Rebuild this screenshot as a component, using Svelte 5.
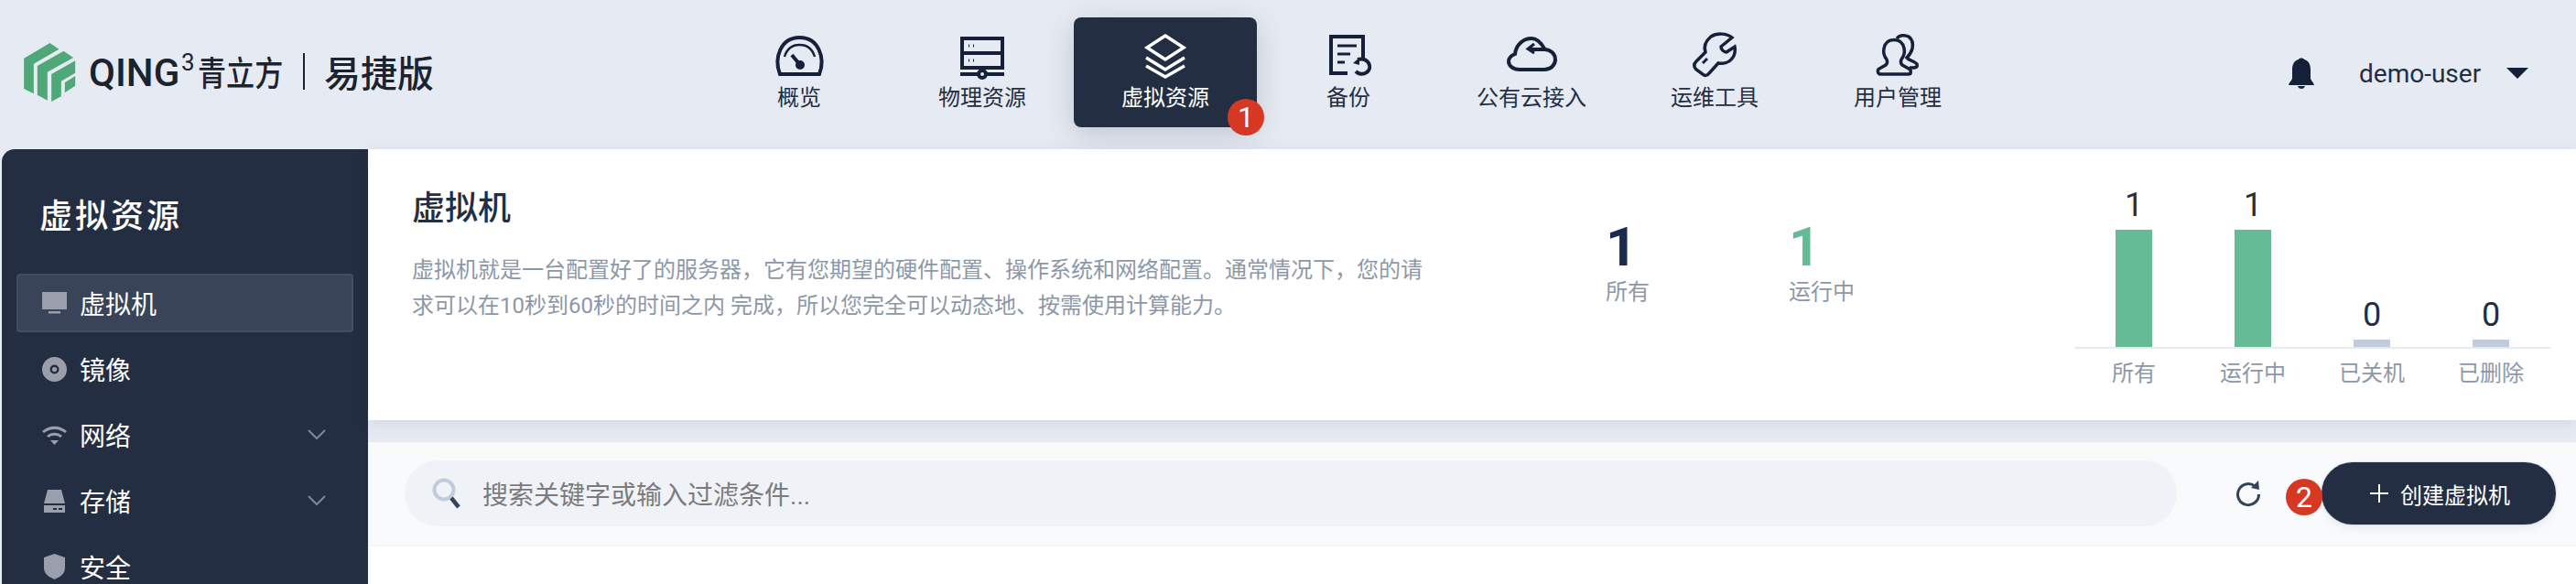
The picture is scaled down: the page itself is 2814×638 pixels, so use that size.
<script>
	const navItems = [
		{ label: '概览', icon: 'gauge' },
		{ label: '物理资源', icon: 'server' },
		{ label: '虚拟资源', icon: 'layers', active: true },
		{ label: '备份', icon: 'backup' },
		{ label: '公有云接入', icon: 'cloud' },
		{ label: '运维工具', icon: 'wrench' },
		{ label: '用户管理', icon: 'user' }
	];

	const sideItems = [
		{ label: '虚拟机', icon: 'monitor', active: true },
		{ label: '镜像', icon: 'disc' },
		{ label: '网络', icon: 'wifi', more: true },
		{ label: '存储', icon: 'drive', more: true },
		{ label: '安全', icon: 'shield' }
	];

	const bars = [
		{ label: '所有', value: 1, height: 128 },
		{ label: '运行中', value: 1, height: 128 },
		{ label: '已关机', value: 0, height: 8 },
		{ label: '已删除', value: 0, height: 8 }
	];
</script>

<div class="page">
	<header class="topbar">
		<div class="logo">
			<svg class="logo-mark" viewBox="18 20 170 195" width="57" height="65" fill="#4fa878">
				<path d="M18 70 L103 20 L133 40 L50 88 V186 L18 170 Z" />
				<path d="M62 95 L148 46 L180 68 L95 115 V208 L62 190 Z" />
				<path d="M108 122 L186 78 V118 L140 145 V195 L108 212 Z" />
				<path d="M152 150 L186 128 V160 L152 183 Z" />
			</svg>
			<span class="logo-en">QING</span><sup class="logo-sup">3</sup>
			<span class="logo-cn">青立方</span>
			<i class="logo-sep"></i>
			<span class="logo-ed">易捷版</span>
		</div>

		<nav class="nav">
			{#each navItems as item}
				<div class="nav-item" class:active={item.active}>
					<svg viewBox="0 0 56 48" width="56" height="48" fill="none" stroke="currentColor" stroke-width="4">
						{#if item.icon === 'gauge'}
							<path d="M7 44 C0 26 8 4 28.500 4 C49 4 57 26 50 44 Z" />
							<path d="M12 25 C15 15 21 12 28.500 12 C36 12 42 15 45 25" stroke-width="2.500" />
							<path d="M20 23 L29 34" stroke-width="4" />
							<circle cx="29" cy="34" r="5" fill="currentColor" stroke="none" />
						{:else if item.icon === 'server'}
							<rect x="6" y="5" width="44" height="16" />
							<rect x="6" y="21" width="44" height="16" />
							<path d="M28 37 V40 M4 44 H52" />
							<circle cx="28" cy="44" r="4" fill="#e6ebf3" />
							<path d="M13 13 H14 M18 13 H19 M13 29 H14 M18 29 H19" stroke-width="3" />
						{:else if item.icon === 'layers'}
							<path d="M28 2 L48 15 L28 28 L8 15 Z" stroke-width="3.500" />
							<path d="M7 26 L28 39 L49 26" stroke-width="3.500" />
							<path d="M7 35 L28 47 L49 35" stroke-width="3.500" />
						{:else if item.icon === 'backup'}
							<path d="M44 26 V3 H9 V43 H27" />
							<path d="M16 13 H37 M16 22 H30 M16 31 H24" stroke-width="3" />
							<path d="M38 28 C50 25 55 37 48 42 C44 45 39 44 36 41" />
							<path d="M33 32 L40 26 L40 34 Z" fill="currentColor" stroke="none" />
						{:else if item.icon === 'cloud'}
							<path d="M42 16 C38 9 34 5 28 5 C19 5 11 12 10 22 C5 24 3 27 3 30 C3 35 8 39 15 39 H42 C49 39 54 34 54 28 C54 22 49 17 42 17 H26" />
							<path d="M31 11 L24 16.500 L31 21" stroke-width="3" />
						{:else if item.icon === 'wrench'}
							<path d="M47 4 C41 -1 30 -1 24 3 C18 8 16 14 18 20 L8 30 C5 33 5 36 8 39 L15 44 C17 46 20 46 22 43 L32 32 C38 33 44 31 47 27 C50 24 51 18 50 14 L41 20 C38 20 35 17 35 14 Z" stroke-width="3.500" />
							<path d="M15 32 L20 27" stroke-width="3" />
						{:else if item.icon === 'user'}
							<path d="M9 44 H40 C43 44 43 39 40 38 L33 34 C31 32 31 30 32 28 C35 24 36 20 35 16 C34 10 30 6.500 24 6.500 C18 6.500 14 10 13 16 C12 20 13 24 16 28 C17 30 17 32 15 34 L8 38 C5.500 39 6 44 9 44 Z" stroke-width="3.500" />
							<path d="M27 5 C30 1 36 1 40 3 C44 6 45 11 44 16 C43 20 41 23 38 26 C40 29 47 30 49 33 C50 36 48 37 45 37 H41" stroke-width="3.500" />
						{/if}
					</svg>
					<span>{item.label}</span>
					{#if item.active}<b class="badge badge-nav">1</b>{/if}
				</div>
			{/each}
		</nav>

		<div class="account">
			<svg viewBox="0 0 28 34" width="28" height="34" fill="#141f38">
				<path d="M11 2 C11 0 17 0 17 2 C22 3 24 8 24 13 V22 C24 25 27 26 28 30 H0 C1 26 4 25 4 22 V13 C4 8 6 3 11 2 Z" />
				<path d="M10 31 H18 C17 35 11 35 10 31 Z" />
			</svg>
			<span class="user-name">demo-user</span>
			<i class="caret"></i>
		</div>
	</header>

	<div class="body">
		<aside class="sidebar">
			<h2>虚拟资源</h2>
			<ul>
				{#each sideItems as item}
					<li class:active={item.active}>
						<svg viewBox="0 0 28 28" width="28" height="28" fill="#9a9fab">
							{#if item.icon === 'monitor'}
								<rect x="0" y="2" width="27" height="19" />
								<rect x="7" y="23" width="13" height="2.500" />
							{:else if item.icon === 'disc'}
								<path fill-rule="evenodd" d="M13.500 1 A13.500 13.500 0 1 1 13.500 28 A13.500 13.500 0 1 1 13.500 1 Z M13.500 9.500 A5 5 0 1 0 13.500 19.500 A5 5 0 1 0 13.500 9.500 Z" />
								<circle cx="13.500" cy="14.500" r="2.600" />
							{:else if item.icon === 'wifi'}
								<path d="M0 10 C8 3 19 3 27 10 L25 12 C18 6.500 9 6.500 2 12 Z" />
								<path d="M5 15 C10 10.500 17 10.500 22 15 L20 17 C16 14 11 14 7 17 Z" />
								<path d="M9 20 H18 L13.500 25 Z" />
							{:else if item.icon === 'drive'}
								<path d="M6 2 H21 L25 17 H2 Z" />
								<path fill-rule="evenodd" d="M2 19 H25 V27 H2 Z M12 22 V24 H16 V22 Z M18 22 V24 H22 V22 Z" />
							{:else if item.icon === 'shield'}
								<path d="M13.500 0 L25 4 V15 C25 22 20 25 13.500 28 C7 25 2 22 2 15 V4 Z" />
							{/if}
						</svg>
						<span>{item.label}</span>
						{#if item.more}
							<svg class="chevron" viewBox="0 0 20 12" width="20" height="12" fill="none" stroke="#7d8494" stroke-width="2.200">
								<path d="M1 1 L10 10 L19 1" />
							</svg>
						{/if}
					</li>
				{/each}
			</ul>
		</aside>

		<main class="main">
			<section class="summary">
				<div class="intro">
					<h1>虚拟机</h1>
					<p>虚拟机就是一台配置好了的服务器，它有您期望的硬件配置、操作系统和网络配置。通常情况下，您的请求可以在10秒到60秒的时间之内 完成，所以您完全可以动态地、按需使用计算能力。</p>
				</div>
				<div class="totals">
					<div class="total">
						<strong>1</strong>
						<span>所有</span>
					</div>
					<div class="total running">
						<strong>1</strong>
						<span>运行中</span>
					</div>
				</div>
				<div class="chart">
					{#each bars as bar}
						<div class="col">
							<div class="plot">
								<span class="value">{bar.value}</span>
								<i class="bar" class:empty={bar.value === 0} style="height: {bar.height}px"></i>
							</div>
							<span class="col-label">{bar.label}</span>
						</div>
					{/each}
				</div>
			</section>

			<section class="toolbar">
				<div class="search">
					<svg viewBox="0 0 32 34" width="32" height="34" fill="none">
						<circle cx="13" cy="13" r="10.500" stroke="#c0ccdb" stroke-width="4" />
						<path d="M21 22 L29 32" stroke="#324558" stroke-width="4.500" />
					</svg>
					<span>搜索关键字或输入过滤条件...</span>
				</div>
				<svg class="refresh" viewBox="0 0 28 30" width="28" height="30" fill="none">
					<path d="M21 7 A11.500 11.500 0 1 0 25.500 16" stroke="#324558" stroke-width="3" />
					<path d="M17 9 L25 1 L26 11 Z" fill="#324558" />
				</svg>
				<button>
					<b class="badge badge-btn">2</b>
					<svg viewBox="0 0 20 20" width="20" height="20" stroke="#fff" stroke-width="2">
						<path d="M10 0 V20 M0 10 H20" />
					</svg>
					创建虚拟机
				</button>
			</section>
		</main>
	</div>
</div>

<style>
	:global(body) {
		margin: 0;
		background: #e6ebf3;
	}

	.page {
		height: 638px;
		overflow: hidden;
		font-family: Roboto, 'Noto Sans CJK SC', sans-serif;
		color: #242e42;
	}

	.topbar {
		height: 163px;
		display: flex;
		position: relative;
	}

	.logo {
		width: 773px;
		box-sizing: border-box;
		padding: 47px 0 0 26px;
		display: flex;
		align-items: flex-start;
		color: #1b232e;
	}

	.logo-mark {
		margin-right: 14px;
	}

	.logo-en {
		font-size: 42px;
		font-weight: 500;
		line-height: 50px;
		margin-top: 8px;
		width: 101px;
	}

	.logo-sup {
		font-size: 26px;
		line-height: 24px;
		margin-top: 9px;
		width: 18px;
	}

	.logo-cn {
		font-size: 37px;
		line-height: 50px;
		margin-top: 10px;
		width: 115px;
		font-weight: 500;
		transform: scaleX(0.84);
		transform-origin: left;
	}

	.logo-sep {
		width: 2px;
		height: 40px;
		margin-top: 11px;
		background: #1b232e;
		margin-right: 21px;
	}

	.logo-ed {
		font-size: 40px;
		line-height: 50px;
		margin-top: 10px;
		font-weight: 500;
	}

	.nav {
		display: flex;
		width: 1400px;
		padding-top: 19px;
		height: 120px;
	}

	.nav-item {
		width: 200px;
		height: 120px;
		display: flex;
		flex-direction: column;
		align-items: center;
		padding-top: 18px;
		box-sizing: border-box;
		position: relative;
		border-radius: 8px;
		color: #162038;
		font-size: 24px;
	}

	.nav-item svg {
		overflow: visible;
	}

	.nav-item span {
		line-height: 34px;
		margin-top: 5px;
		color: #242e42;
	}

	.nav-item.active {
		background: #242e42;
		color: #fff;
		box-shadow: 0 8px 32px rgba(36, 46, 66, 0.2);
	}

	.nav-item.active span {
		color: #fff;
	}

	.badge {
		position: absolute;
		width: 40px;
		height: 40px;
		border-radius: 50%;
		background: #d63823;
		color: #fff;
		font-size: 32px;
		font-weight: 400;
		line-height: 40px;
		text-align: center;
	}

	.badge-nav {
		right: -8px;
		bottom: -9px;
	}

	.badge-btn {
		left: -39px;
		top: 18px;
	}

	.account {
		flex: 1;
		display: flex;
		align-items: center;
		padding: 0 0 3px 327px;
		font-size: 28px;
	}

	.user-name {
		margin-left: 49px;
	}

	.caret {
		margin-left: 28px;
		border-top: 12px solid #141f38;
		border-left: 12px solid transparent;
		border-right: 12px solid transparent;
	}

	.body {
		display: flex;
		padding-left: 2px;
		height: 475px;
	}

	.sidebar {
		width: 400px;
		flex: none;
		background: #242e42;
		border-radius: 14px 0 0 0;
		padding: 0 16px;
		box-sizing: border-box;
		color: #fff;
	}

	.sidebar h2 {
		margin: 53px 0 0 25px;
		font-size: 36px;
		line-height: 42px;
		font-weight: 500;
		letter-spacing: 3px;
	}

	.sidebar ul {
		list-style: none;
		margin: 41px 0 0;
		padding: 0;
		display: flex;
		flex-direction: column;
		gap: 8px;
	}

	.sidebar li {
		height: 64px;
		box-sizing: border-box;
		display: flex;
		align-items: center;
		gap: 13px;
		padding: 0 28px 0 26px;
		font-size: 28px;
		border: 2px solid transparent;
		border-radius: 4px;
	}

	.sidebar li.active {
		background: #3a4459;
		border-color: #434e66;
	}

	.chevron {
		margin-left: auto;
	}

	.main {
		flex: 1;
		min-width: 0;
		display: flex;
		flex-direction: column;
	}

	.main::after {
		content: '';
		flex: 1;
		background: #fff;
	}

	.summary {
		height: 296px;
		flex: none;
		background: #fff;
		display: flex;
		position: relative;
		box-shadow: 0 4px 16px rgba(36, 46, 66, 0.1);
	}

	.intro {
		width: 1304px;
		flex: none;
		box-sizing: border-box;
		padding: 41px 0 0 48px;
	}

	.intro h1 {
		margin: 0;
		font-size: 36px;
		line-height: 48px;
		font-weight: 500;
	}

	.intro p {
		margin: 24px 0 0;
		width: 1110px;
		font-size: 24px;
		line-height: 39px;
		color: #8c98a8;
	}

	.totals {
		display: flex;
		padding-top: 77px;
		box-sizing: border-box;
		flex: none;
		margin-left: 48px;
	}

	.total {
		width: 200px;
		display: flex;
		flex-direction: column;
	}

	.total strong {
		font-size: 60px;
		line-height: 60px;
		font-weight: 700;
		color: #1b2b4f;
	}

	.total span {
		margin-top: 1px;
		font-size: 24px;
		line-height: 36px;
		color: #8c98a8;
	}

	.total.running strong {
		color: #65bb96;
	}

	.chart {
		position: absolute;
		left: 1864px;
		top: 0;
		width: 520px;
		display: flex;
	}

	.col {
		width: 130px;
		display: flex;
		flex-direction: column;
		align-items: center;
	}

	.plot {
		width: 100%;
		height: 216px;
		box-sizing: content-box;
		border-bottom: 2px solid #e6ebf3;
		display: flex;
		flex-direction: column;
		align-items: center;
		justify-content: flex-end;
	}

	.value {
		font-size: 36px;
		line-height: 42px;
		margin-bottom: 6px;
	}

	.bar {
		width: 40px;
		background: #65bb96;
	}

	.bar.empty {
		background: #c0ccdb;
	}

	.col-label {
		margin-top: 9px;
		font-size: 24px;
		line-height: 36px;
		color: #8c98a8;
	}

	.toolbar {
		margin-top: 24px;
		height: 114px;
		flex: none;
		box-sizing: border-box;
		background: #f9fafc;
		border-bottom: 2px solid #f3f5f8;
		padding: 20px 22px 20px 40px;
		display: flex;
		align-items: center;
	}

	.search {
		width: 1936px;
		height: 72px;
		flex: none;
		border-radius: 36px;
		background: #eff2f7;
		display: flex;
		align-items: center;
		padding-left: 30px;
		gap: 23px;
		box-sizing: border-box;
		font-size: 28px;
		color: #7b7b7b;
	}

	.refresh {
		margin-left: 64px;
		margin-right: 66px;
		flex: none;
	}

	button {
		width: 256px;
		height: 68px;
		flex: none;
		position: relative;
		border: 0;
		padding: 0 0 0 3px;
		border-radius: 34px;
		background: #242e42;
		color: #fff;
		font-family: inherit;
		font-size: 24px;
		display: flex;
		align-items: center;
		justify-content: center;
		gap: 13px;
		box-shadow: 0 4px 8px rgba(36, 46, 66, 0.08), 0 0 0 1px rgba(209, 216, 228, 0.6);
	}
</style>
